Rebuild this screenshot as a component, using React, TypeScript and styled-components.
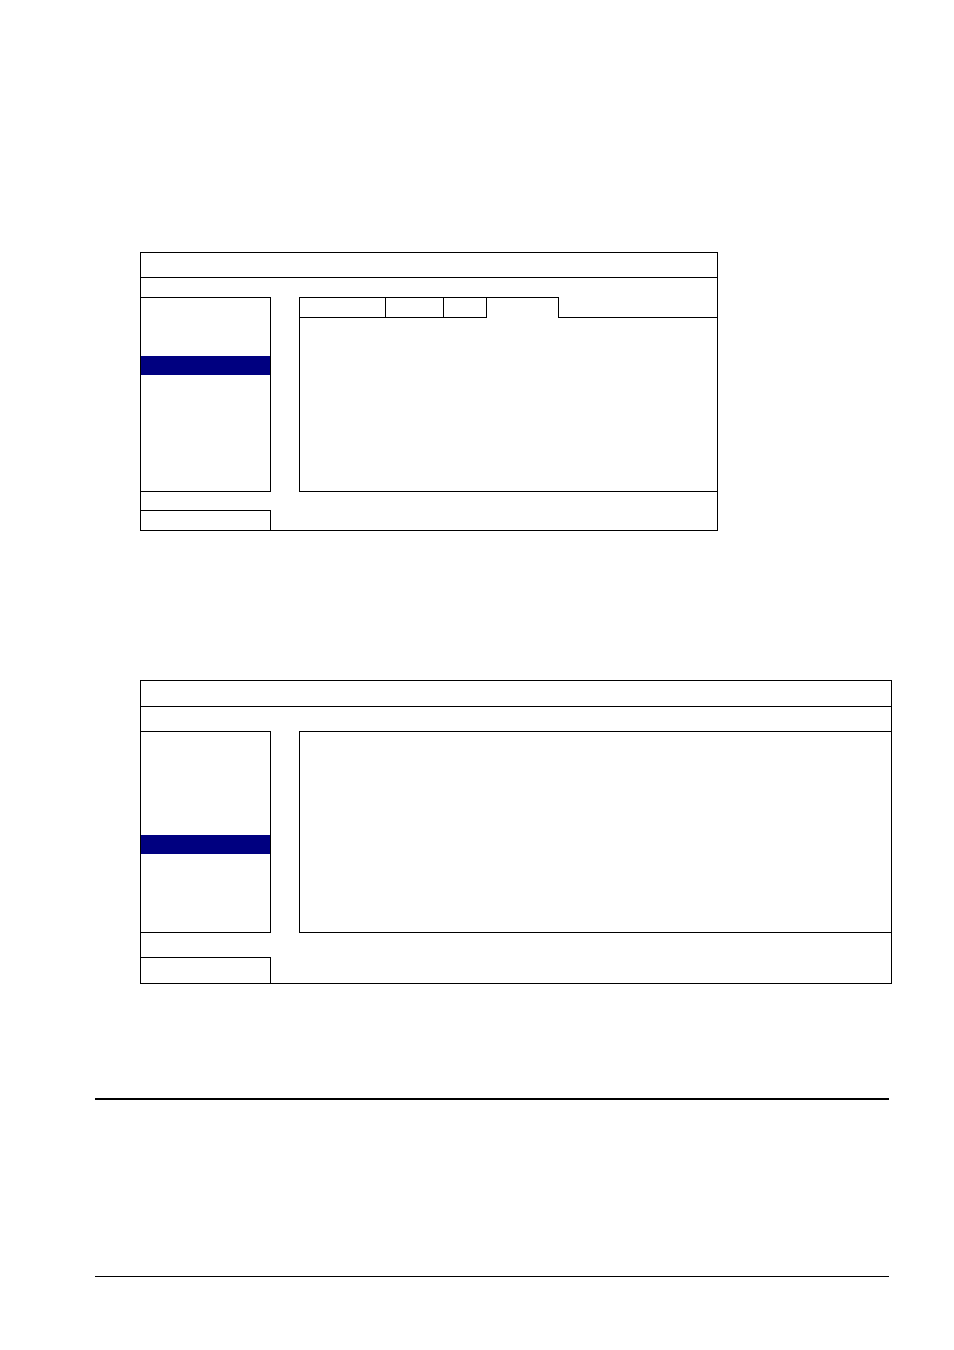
import React from "react";
import styled, { createGlobalStyle } from "styled-components";

const Global = createGlobalStyle`
  html, body { margin: 0; padding: 0; background: #ffffff; }
  body { font-family: "Liberation Sans", Arial, sans-serif; }
`;

const Page = styled.div`
  width: 954px;
  height: 1350px;
  box-sizing: border-box;
  padding-top: 252px;
  display: flex;
  flex-direction: column;
  background: #fff;
`;

const Screen = styled.div<{ $w: number; $mb: number }>`
  box-sizing: border-box;
  width: ${(p) => p.$w}px;
  margin-left: 140px;
  margin-bottom: ${(p) => p.$mb}px;
  border: 1px solid #000;
  display: flex;
  flex-direction: column;
`;

const TitleBar = styled.div<{ $h: number }>`
  height: ${(p) => p.$h}px;
  border-bottom: 1px solid #000;
`;

const Spacer = styled.div<{ $h: number }>`
  height: ${(p) => p.$h}px;
`;

const Body = styled.div`
  display: flex;
  align-items: stretch;
`;

const Menu = styled.div<{ $h: number }>`
  box-sizing: border-box;
  width: 130px;
  height: ${(p) => p.$h}px;
  border-top: 1px solid #000;
  border-right: 1px solid #000;
  border-bottom: 1px solid #000;
  display: flex;
  flex-direction: column;
`;

const MenuItem = styled.div<{ $top: number }>`
  margin-top: ${(p) => p.$top}px;
  height: 19px;
  background: #000080;
`;

const Panel = styled.div<{ $h: number; $tabs?: boolean }>`
  box-sizing: border-box;
  flex: 1;
  margin-left: 28px;
  height: ${(p) => p.$h}px;
  border-left: 1px solid #000;
  border-bottom: 1px solid #000;
  border-top: ${(p) => (p.$tabs ? "none" : "1px solid #000")};
  display: flex;
  flex-direction: column;
`;

const TabRow = styled.div`
  display: flex;
  height: 21px;
`;

const Tab = styled.div<{ $w: number; $active?: boolean }>`
  box-sizing: border-box;
  width: ${(p) => p.$w}px;
  border-top: 1px solid #000;
  border-right: 1px solid #000;
  border-bottom: ${(p) => (p.$active ? "none" : "1px solid #000")};
`;

const TabFill = styled.div`
  flex: 1;
  border-bottom: 1px solid #000;
`;

const Footer = styled.div<{ $h: number }>`
  box-sizing: border-box;
  width: 130px;
  height: ${(p) => p.$h}px;
  border-top: 1px solid #000;
  border-right: 1px solid #000;
`;

const Rule = styled.div<{ $top: number; $t: number }>`
  margin-left: 95px;
  width: 794px;
  margin-top: ${(p) => p.$top}px;
  height: ${(p) => p.$t}px;
  background: #000;
`;

export default function App() {
  return (
    <>
      <Global />
      <Page>
        <Screen $w={578} $mb={149}>
          <TitleBar $h={24} />
          <Spacer $h={19} />
          <Body>
            <Menu $h={195}>
              <MenuItem $top={58} />
            </Menu>
            <Panel $h={195} $tabs>
              <TabRow>
                <Tab $w={86} />
                <Tab $w={58} />
                <Tab $w={43} />
                <Tab $w={72} $active />
                <TabFill />
              </TabRow>
            </Panel>
          </Body>
          <Spacer $h={18} />
          <Footer $h={20} />
        </Screen>
        <Screen $w={752} $mb={0}>
          <TitleBar $h={25} />
          <Spacer $h={24} />
          <Body>
            <Menu $h={202}>
              <MenuItem $top={103} />
            </Menu>
            <Panel $h={202} />
          </Body>
          <Spacer $h={24} />
          <Footer $h={26} />
        </Screen>
        <Rule $top={114} $t={2} />
        <Rule $top={176} $t={1} />
      </Page>
    </>
  );
}
